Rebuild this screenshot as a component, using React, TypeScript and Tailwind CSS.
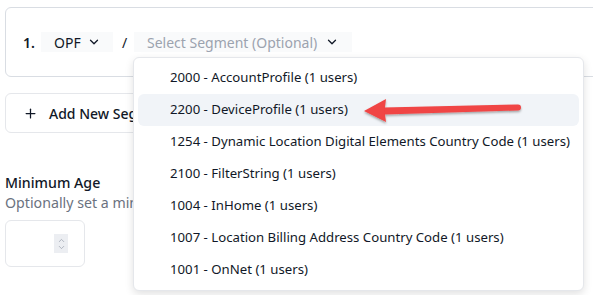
import { ChevronDown, ChevronUp, Plus } from "lucide-react";

const segments = [
  "2000 - AccountProfile (1 users)",
  "2200 - DeviceProfile (1 users)",
  "1254 - Dynamic Location Digital Elements Country Code (1 users)",
  "2100 - FilterString (1 users)",
  "1004 - InHome (1 users)",
  "1007 - Location Billing Address Country Code (1 users)",
  "1001 - OnNet (1 users)",
];

export default function App() {
  return (
    <div
      className="relative h-[295px] w-[593px] overflow-hidden bg-white text-[#111827]"
      style={{ fontFamily: '"Noto Sans", "Open Sans", sans-serif' }}
    >
      <div className="pl-[5px] pt-[7px]">
        {/* segment path card */}
        <div className="mr-[-40px] flex h-[70px] items-center rounded-l-md border border-[#d9dde3] pl-[17px]">
          <span className="w-[18px] text-[14px] font-semibold">1.</span>
          <button className="flex h-[20px] w-[72px] items-center gap-[6px] whitespace-nowrap bg-[#f9fafb] pl-[13px] text-[14px]">
            OPF
            <ChevronDown className="h-[14px] w-[14px]" strokeWidth={2.2} />
          </button>
          <span className="ml-[9px] w-[12px] text-[14px]">/</span>
          <button className="flex h-[20px] w-[218px] items-center gap-[8px] whitespace-nowrap bg-[#f9fafb] pl-[13px] text-[14px] text-[#9ca3af]">
            Select Segment (Optional)
            <ChevronDown className="h-[14px] w-[14px] text-[#111827]" strokeWidth={2.2} />
          </button>
        </div>

        {/* add new segment */}
        <div className="mt-[16px] flex h-[40px] w-[200px] items-center gap-[11px] whitespace-nowrap rounded-md border border-[#e5e7eb] pl-[17px] text-[14px] font-medium">
          <Plus className="h-[15px] w-[15px]" strokeWidth={2} />
          Add New Segment
        </div>

        {/* minimum age */}
        <div className="mt-[40px]">
          <div className="text-[14.2px] font-medium leading-[20px]">Minimum Age</div>
          <div className="whitespace-nowrap text-[14.2px] leading-[20px] text-[#6b7280]">
            Optionally set a minimum age
          </div>
          <div className="mt-[7px] flex h-[47px] w-[80px] items-center justify-end rounded-md border border-[#e5e7eb] pr-[16px]">
            <div className="flex h-[19px] w-[14px] flex-col items-center justify-center bg-[#eceef2] text-[#9ca3af]">
              <ChevronUp className="-mb-[2px] h-[9px] w-[9px]" strokeWidth={2} />
              <ChevronDown className="h-[9px] w-[9px]" strokeWidth={2} />
            </div>
          </div>
        </div>
      </div>

      {/* dropdown */}
      <div className="absolute left-[133px] top-[57px] w-[451px] rounded-md border border-[#e5e7eb] bg-white px-[4px] py-[4px] shadow-[0_3px_8px_rgba(0,0,0,0.12)]">
        {segments.map((s, i) => (
          <div
            key={s}
            className={`flex h-[32px] items-center whitespace-nowrap rounded-md pl-[32px] text-[13.2px] text-[#111827] ${
              i === 1 ? "bg-[#f1f4f8]" : ""
            }`}
          >
            {s}
          </div>
        ))}
      </div>

      {/* annotation arrow */}
      <svg className="absolute left-[360px] top-[95px]" width="170" height="30" viewBox="0 0 170 30">
        <defs>
          <filter id="sh" x="-10%" y="-50%" width="120%" height="200%">
            <feDropShadow dx="0" dy="1.5" stdDeviation="1.2" floodColor="#000" floodOpacity="0.35" />
          </filter>
        </defs>
        <g filter="url(#sh)">
          <path d="M24 12.5 L158 9.5 A3 3 0 0 1 158 15.5 L24 19.5 Z" fill="#f04444" />
          <path d="M4 16 L26 4 L24.5 16 L26 27 Z" fill="#f04444" />
        </g>
      </svg>
    </div>
  );
}
